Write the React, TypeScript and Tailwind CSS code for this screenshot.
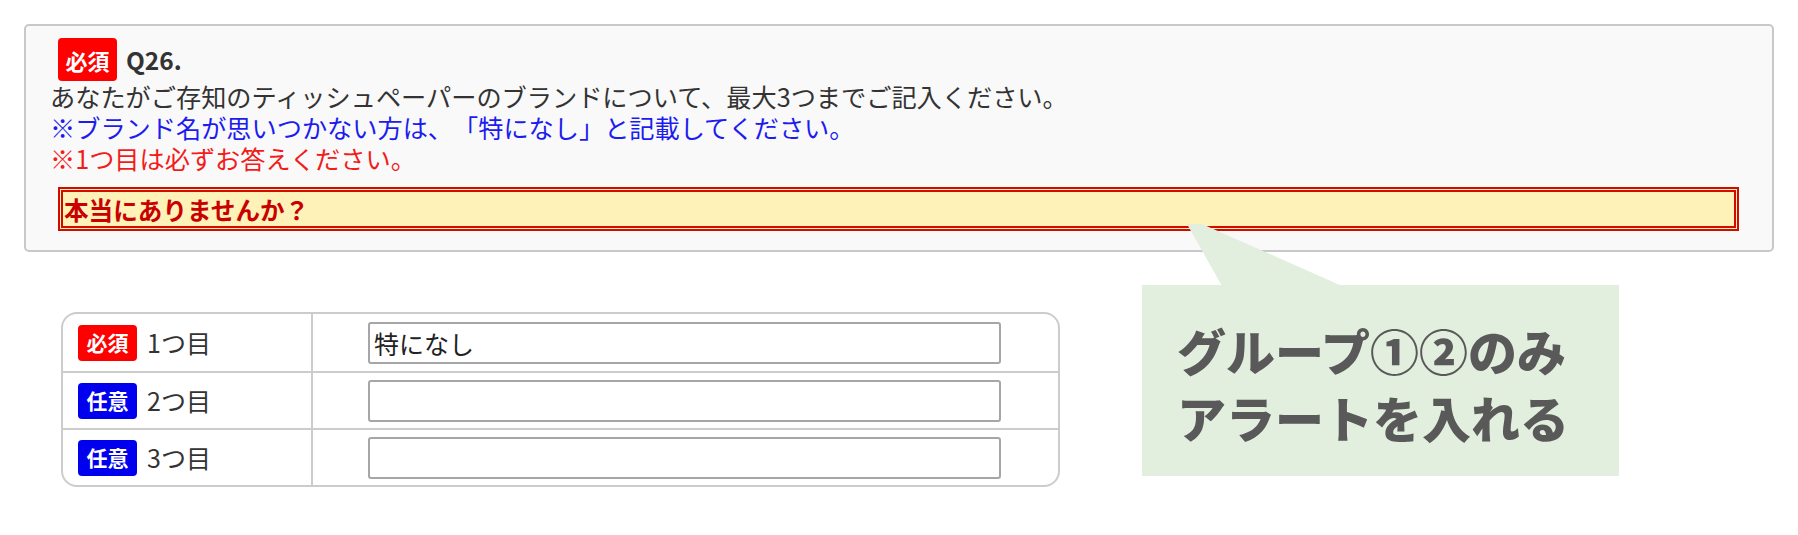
import React from 'react';

const FONT = '"Noto Sans CJK JP", "Noto Sans", sans-serif';

type Row = { required: boolean; label: string; value: string };

const rows: Row[] = [
  { required: true, label: '1つ目', value: '特になし' },
  { required: false, label: '2つ目', value: '' },
  { required: false, label: '3つ目', value: '' },
];

const Badge: React.FC<{ required: boolean; big?: boolean }> = ({ required, big }) => (
  <span
    className={`flex items-center justify-center rounded-[4px] font-bold text-white leading-none ${
      required ? 'bg-[#ff0000]' : 'bg-[#0000ee]'
    } ${big ? 'w-[59px] h-[43px] text-[22px]' : 'w-[59px] h-[36px] text-[21px]'}`}
  >
    {required ? '必須' : '任意'}
  </span>
);

export default function App() {
  return (
    <div
      className="min-h-screen bg-white px-[24px] pt-[24px] [text-spacing-trim:space-all]"
      style={{ fontFamily: FONT }}
    >
      {/* Question box */}
      <div className="rounded-[5px] border-2 border-[#c8c8c8] bg-[#f9f9f9] pl-[24px] pr-[24px] pt-[12px] pb-[19px] text-[25.2px] leading-[31px]">
        <div className="ml-[8px] flex items-center gap-[9px]">
          <Badge required big />
          <span className="font-bold text-[#333333] text-[24.5px]">Q26.</span>
        </div>
        <p className="text-[#333333]">
          あなたがご存知のティッシュペーパーのブランドについて、最大3つまでご記入ください。
        </p>
        <p className="text-[#1c1cf0]">※ブランド名が思いつかない方は、「特になし」と記載してください。</p>
        <p className="text-[#f21c1c]">※1つ目は必ずお答えください。</p>
        <div className="mt-[13px] ml-[8px] mr-[9px] h-[44px] border-[5px] border-double border-[#d00c00] bg-[#fff2b8] pl-[1px] text-[24.6px] font-bold leading-[34px] text-[#c80000]">
          本当にありませんか？
        </div>
      </div>

      {/* Answers + note */}
      <div className="mt-[33px] flex items-start">
        <div className="ml-[37px] mt-[27px] w-[999px] overflow-hidden rounded-[16px] border-2 border-[#cccccc] bg-white">
          {rows.map((r, i) => (
            <div
              key={r.label}
              className={`grid grid-cols-[250px_1fr] h-[57px] ${i > 0 ? 'border-t-2 border-[#cccccc]' : ''}`}
            >
              <div className="flex items-center gap-[10px] border-r-2 border-[#cccccc] pl-[15px]">
                <Badge required={r.required} />
                <span className="text-[25px] text-[#333333]">{r.label}</span>
              </div>
              <div className="flex items-center pl-[55px]">
                <input
                  readOnly
                  value={r.value}
                  className="h-[42px] w-[633px] rounded-[3px] border-2 border-[#a6a6a6] bg-white px-[4px] text-[25px] text-[#222222] outline-none"
                  style={{ fontFamily: FONT }}
                />
              </div>
            </div>
          ))}
        </div>

        <div className="relative ml-[82px] flex h-[191px] w-[477px] flex-col justify-center bg-[#e2efdf] pl-[35px] pt-[4px] text-[49px] font-extrabold leading-[67px] text-[#595959]">
          <svg
            className="absolute left-[40px] top-[-61px]"
            width="162"
            height="62"
            viewBox="0 0 162 62"
          >
            <polygon points="5,0 20,0 160,62 40,62" fill="#e2efdf" />
          </svg>
          <span>グループ①②のみ</span>
          <span>アラートを入れる</span>
        </div>
      </div>
    </div>
  );
}
